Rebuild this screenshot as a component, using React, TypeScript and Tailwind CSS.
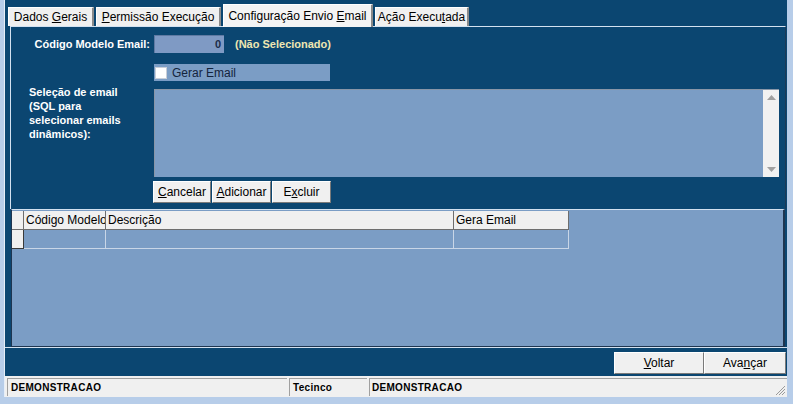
import React from "react";

const U = ({ children }: { children: React.ReactNode }) => <span className="underline underline-offset-[1px]">{children}</span>;

function Tab({ w, active, children }: { w: number; active?: boolean; children: React.ReactNode }) {
  return active ? (
    <div
      style={{ width: w }}
      className="h-[23px] bg-[#f4f4f4] border-t border-l border-white border-r-2 border-r-[#8a8a8a] flex items-center justify-center text-[12px] text-black relative z-10 -mb-[1px]"
    >
      <span className="whitespace-pre">{children}</span>
    </div>
  ) : (
    <div
      style={{ width: w }}
      className="h-[19px] mt-[3px] bg-[#f0f0f0] border-t border-l border-white border-r-2 border-r-[#8a8a8a] flex items-center justify-center text-[12px] text-black"
    >
      <span className="whitespace-pre">{children}</span>
    </div>
  );
}

function Btn({ w, children, h = 22 }: { w: number; h?: number; children: React.ReactNode }) {
  return (
    <div
      style={{ width: w, height: h }}
      className="bg-[#f0f0f0] border-t border-l border-white border-r border-b border-r-[#7a7a7a] border-b-[#7a7a7a] flex items-center justify-center text-[12px] text-black shrink-0"
    >
      <span>{children}</span>
    </div>
  );
}

export default function App() {
  return (
    <div className="w-[793px] h-[404px] bg-[#b7cde9] flex flex-col overflow-hidden font-['Liberation_Sans',Arial,sans-serif]">
      <div className="h-[397px] flex flex-col ml-[4px] mr-[6px] border-l border-[#e6eef8] bg-[#0b4671]">
        {/* tabs */}
        <div className="h-[22px] mt-[4px] pl-[3px] flex items-start gap-[2px]">
          <Tab w={86}>
            {"Dados "}
            <U>G</U>
            {"erais"}
          </Tab>
          <Tab w={125}>
            <U>P</U>
            {"ermissão Execução"}
          </Tab>
          <Tab w={150} active>
            {"Configuração Envio "}
            <U>E</U>
            {"mail"}
          </Tab>
          <Tab w={94}>
            {"Ação Execu"}
            <U>t</U>
            {"ada"}
          </Tab>
        </div>

        {/* panel */}
        <div className="h-[183px] ml-[5px] mr-[1px] border border-[#d3e1f0] border-r-[#1c3a57] border-b-0 flex flex-col pt-[8px]">
          <div className="flex items-center h-[18px]">
            <div className="w-[143px] pr-[4px] text-right text-[11px] font-bold text-white">Código Modelo Email:</div>
            <div className="w-[70px] h-[18px] bg-[#7f9ac4] border-t border-l border-[#5f7aa3] flex items-center justify-end pr-[3px] text-[11px] font-bold text-[#1c2d4a]">
              0
            </div>
            <div className="ml-[11px] text-[11px] font-bold text-[#efe6b2]">(Não Selecionado)</div>
          </div>

          <div className="ml-[143px] mt-[11px] w-[176px] h-[17px] bg-[#7b9dc5] flex items-center">
            <div className="w-[12px] h-[12px] ml-[1px] bg-white border border-[#c9cfd8]" />
            <div className="ml-[5px] text-[12px] text-[#14243d]">Gerar Email</div>
          </div>

          <div className="flex mt-[8px]">
            <div className="w-[143px] pl-[18px] -mt-[4px] text-[11px] leading-[14px] font-bold text-white">
              Seleção de email
              <br />
              (SQL para
              <br />
              selecionar emails
              <br />
              dinâmicos):
            </div>
            <div className="w-[625px] h-[88px] bg-[#7b9dc5] border-t border-l border-[#8896a8] flex justify-end">
              <div className="w-[16px] h-full bg-[#f1f1f1] flex flex-col items-center justify-between py-[5px]">
                <svg width="9" height="5" viewBox="0 0 9 5">
                  <path d="M0 5 L4.5 0 L9 5 Z" fill="#a0a0a0" />
                </svg>
                <svg width="9" height="5" viewBox="0 0 9 5">
                  <path d="M0 0 L4.5 5 L9 0 Z" fill="#a0a0a0" />
                </svg>
              </div>
            </div>
          </div>

          <div className="flex ml-[142px] mt-[4px] gap-[1px]">
            <Btn w={58}>
              <U>C</U>
              {"ancelar"}
            </Btn>
            <Btn w={59}>
              <U>A</U>
              {"dicionar"}
            </Btn>
            <Btn w={59}>
              {"E"}
              <U>x</U>
              {"cluir"}
            </Btn>
          </div>
        </div>

        {/* grid */}
        <div className="h-[138px] ml-[6px] mr-[2px] bg-[#7b9dc5] border-l border-b border-r-2 border-[#1e3550] border-t border-t-[#d3e1f0] pt-[1px]">
          <div className="flex h-[19px]">
            <div className="w-[12px] bg-[#f0f0f0] border-r border-b border-[#6e6e6e]" />
            <div className="w-[82px] bg-[#f0f0f0] border-r border-b border-[#6e6e6e] pl-[2px] text-[12px] text-black leading-[18px] overflow-hidden whitespace-nowrap">
              Código Modelo
            </div>
            <div className="w-[348px] bg-[#f0f0f0] border-r border-b border-[#6e6e6e] pl-[2px] text-[12px] text-black leading-[18px]">
              Descrição
            </div>
            <div className="w-[115px] bg-[#f0f0f0] border-r border-b border-[#6e6e6e] pl-[2px] text-[12px] text-black leading-[18px]">
              Gera Email
            </div>
          </div>
          <div className="flex h-[19px]">
            <div className="w-[12px] bg-[#f0f0f0] border-r border-b border-[#3a3a3a]" />
            <div className="w-[82px] border-r border-b border-[#c9d6e7]" />
            <div className="w-[348px] border-r border-b border-[#c9d6e7]" />
            <div className="w-[115px] border-r border-b border-[#c9d6e7]" />
          </div>
        </div>

        {/* bottom bar */}
        <div className="h-[29px] border-t border-[#d3e1f0] flex justify-end items-start pt-[4px] pr-[1px]">
          <Btn w={90}>
            <U>V</U>
            {"oltar"}
          </Btn>
          <Btn w={82}>
            {"Ava"}
            <U>n</U>
            {"çar"}
          </Btn>
        </div>

        {/* status bar */}
        <div className="h-[21px] bg-[#f0f0f0] flex items-stretch pt-[2px] pb-[1px] relative">
          <div className="w-[280px] ml-[2px] border-t border-l border-[#a0a0a0] pl-[3px] text-[10px] tracking-[0.3px] font-bold text-black flex items-center">
            DEMONSTRACAO
          </div>
          <div className="w-[78px] ml-[2px] border-t border-l border-[#a0a0a0] pl-[3px] text-[10px] tracking-[0.3px] font-bold text-black flex items-center">
            Tecinco
          </div>
          <div className="flex-1 ml-[2px] border-t border-l border-[#a0a0a0] pl-[2px] text-[10px] tracking-[0.3px] font-bold text-black flex items-center">
            DEMONSTRACAO
          </div>
          <svg className="absolute right-[1px] bottom-[1px]" width="12" height="12" viewBox="0 0 12 12">
            <path d="M11 2 L2 11 M11 5 L5 11 M11 8 L8 11" stroke="#9a9a9a" strokeWidth="1" />
          </svg>
        </div>
      </div>
    </div>
  );
}
